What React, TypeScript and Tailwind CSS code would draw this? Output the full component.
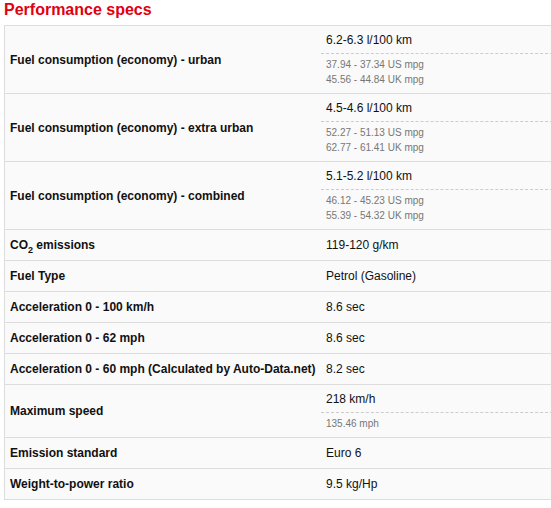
import React from "react";

type Spec = {
  label: React.ReactNode;
  value: string;
  sub?: string[];
};

const SPECS: Spec[] = [
  {
    label: "Fuel consumption (economy) - urban",
    value: "6.2-6.3 l/100 km",
    sub: ["37.94 - 37.34 US mpg", "45.56 - 44.84 UK mpg"],
  },
  {
    label: "Fuel consumption (economy) - extra urban",
    value: "4.5-4.6 l/100 km",
    sub: ["52.27 - 51.13 US mpg", "62.77 - 61.41 UK mpg"],
  },
  {
    label: "Fuel consumption (economy) - combined",
    value: "5.1-5.2 l/100 km",
    sub: ["46.12 - 45.23 US mpg", "55.39 - 54.32 UK mpg"],
  },
  {
    label: (
      <>
        CO<sub className="text-[9px] align-[-2px]">2</sub> emissions
      </>
    ),
    value: "119-120 g/km",
  },
  { label: "Fuel Type", value: "Petrol (Gasoline)" },
  { label: "Acceleration 0 - 100 km/h", value: "8.6 sec" },
  { label: "Acceleration 0 - 62 mph", value: "8.6 sec" },
  { label: "Acceleration 0 - 60 mph (Calculated by Auto-Data.net)", value: "8.2 sec" },
  { label: "Maximum speed", value: "218 km/h", sub: ["135.46 mph"] },
  { label: "Emission standard", value: "Euro 6" },
  { label: "Weight-to-power ratio", value: "9.5 kg/Hp" },
];

function SpecRow({ spec }: { spec: Spec }) {
  return (
    <div className="flex border-b border-[#dddddd]">
      <div className="w-[311px] flex items-center pl-[5px] font-bold text-[12px] text-[#111] whitespace-nowrap">
        <span>{spec.label}</span>
      </div>
      <div className="flex-1 pl-[5px] text-[12px] text-[#111]">
        {spec.sub ? (
          <>
            <div className="h-[27px] flex items-center pl-[5px]">{spec.value}</div>
            <div className="border-t border-dashed border-[#cccccc] pl-[5px] pt-[3px] pb-[6px] text-[10px] leading-[15px] text-[#777]">
              {spec.sub.map((s) => (
                <div key={s}>{s}</div>
              ))}
            </div>
          </>
        ) : (
          <div className="h-[30px] flex items-center pl-[5px]">{spec.value}</div>
        )}
      </div>
    </div>
  );
}

export default function App() {
  return (
    <div className="w-[551px] h-[508px] overflow-hidden bg-white" style={{ fontFamily: '"Liberation Sans", Arial, sans-serif' }}>
      <h2 className="pl-[4px] text-[16px] leading-[20px] font-bold text-[#e1000f] mb-[5px]">Performance specs</h2>
      <div className="ml-[4px] w-[570px] border border-b-0 border-[#dddddd] bg-[#fafafa]">
        {SPECS.map((spec, i) => (
          <SpecRow key={i} spec={spec} />
        ))}
      </div>
    </div>
  );
}
